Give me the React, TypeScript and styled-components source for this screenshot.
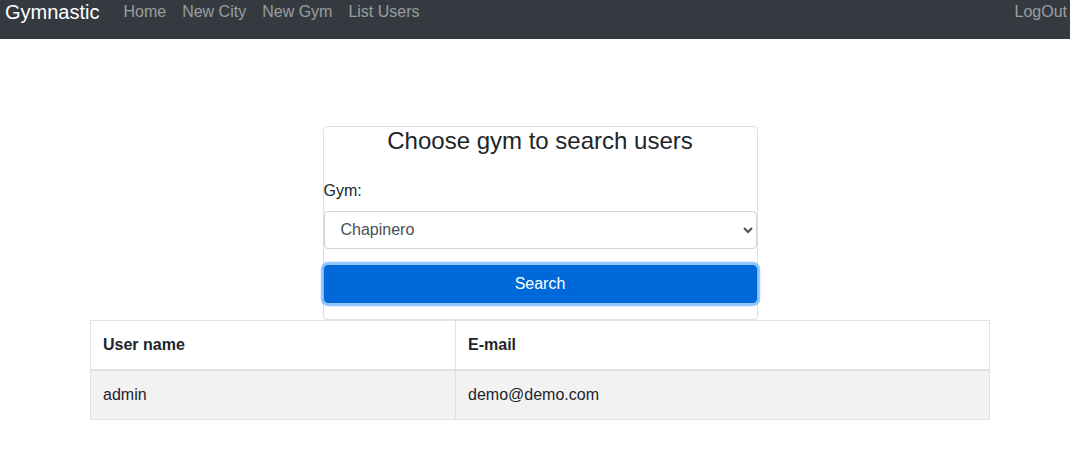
import React from "react";
import styled, { createGlobalStyle } from "styled-components";

const GlobalStyle = createGlobalStyle`
  * { box-sizing: border-box; }
  body {
    margin: 0;
    font-family: "Liberation Sans", Arial, sans-serif;
    font-size: 16px;
    line-height: 1.5;
    color: #212529;
    background: #fff;
  }
`;

const NavBar = styled.nav`
  height: 39px;
  background: #343a40;
  display: flex;
  align-items: flex-start;
  padding: 0 3px 0 5px;
`;

const Brand = styled.a`
  font-size: 20px;
  line-height: 24px;
  color: #fff;
  text-decoration: none;
  margin-right: 24px;
`;

const NavLinks = styled.div`
  display: flex;
  gap: 16px;
  flex: 1;
`;

const NavLink = styled.a`
  font-size: 16px;
  line-height: 24px;
  color: rgba(255, 255, 255, 0.5);
  text-decoration: none;
`;

const Main = styled.main`
  padding: 87px 0 0 10px;
  display: flex;
  flex-direction: column;
  align-items: center;
`;

const Card = styled.div`
  width: 435px;
  border: 1px solid rgba(0, 0, 0, 0.125);
  border-radius: 4px;
  display: flex;
  flex-direction: column;
  padding-bottom: 16px;
`;

const Title = styled.h3`
  margin: 0 0 23px;
  font-size: 24px;
  font-weight: 500;
  line-height: 1.2;
  text-align: center;
`;

const Label = styled.label`
  display: block;
  margin-bottom: 8px;
`;

const Select = styled.select`
  width: 100%;
  height: 38px;
  padding: 6px 12px;
  font-family: inherit;
  font-size: 16px;
  color: #495057;
  background: #fff;
  border: 1px solid #ced4da;
  border-radius: 4px;
  margin-bottom: 16px;
`;

const Button = styled.button`
  width: 100%;
  height: 38px;
  font-family: inherit;
  font-size: 16px;
  color: #fff;
  background: #0069d9;
  border: 1px solid #0062cc;
  border-radius: 4px;
  box-shadow: 0 0 0 3.2px rgba(38, 143, 255, 0.5);
`;

const Table = styled.table`
  width: 900px;
  border-collapse: collapse;
`;

const Th = styled.th<{ $w?: number }>`
  text-align: left;
  padding: 12px;
  font-weight: 700;
  border: 1px solid #dee2e6;
  border-bottom-width: 2px;
  width: ${(p) => (p.$w ? `${p.$w}px` : "auto")};
`;

const Tr = styled.tr<{ $striped?: boolean }>`
  background: ${(p) => (p.$striped ? "#f2f2f2" : "#fff")};
`;

const Td = styled.td`
  padding: 12px;
  border: 1px solid #dee2e6;
`;

export default function App() {
  return (
    <>
      <GlobalStyle />
      <NavBar>
        <Brand href="#">Gymnastic</Brand>
        <NavLinks>
          <NavLink href="#">Home</NavLink>
          <NavLink href="#">New City</NavLink>
          <NavLink href="#">New Gym</NavLink>
          <NavLink href="#">List Users</NavLink>
        </NavLinks>
        <NavLink href="#">LogOut</NavLink>
      </NavBar>
      <Main>
        <Card>
          <Title>Choose gym to search users</Title>
          <Label>Gym:</Label>
          <Select defaultValue="Chapinero">
            <option>Chapinero</option>
          </Select>
          <Button>Search</Button>
        </Card>
        <Table>
          <thead>
            <tr>
              <Th $w={365}>User name</Th>
              <Th>E-mail</Th>
            </tr>
          </thead>
          <tbody>
            <Tr $striped>
              <Td>admin</Td>
              <Td>demo@demo.com</Td>
            </Tr>
          </tbody>
        </Table>
      </Main>
    </>
  );
}
